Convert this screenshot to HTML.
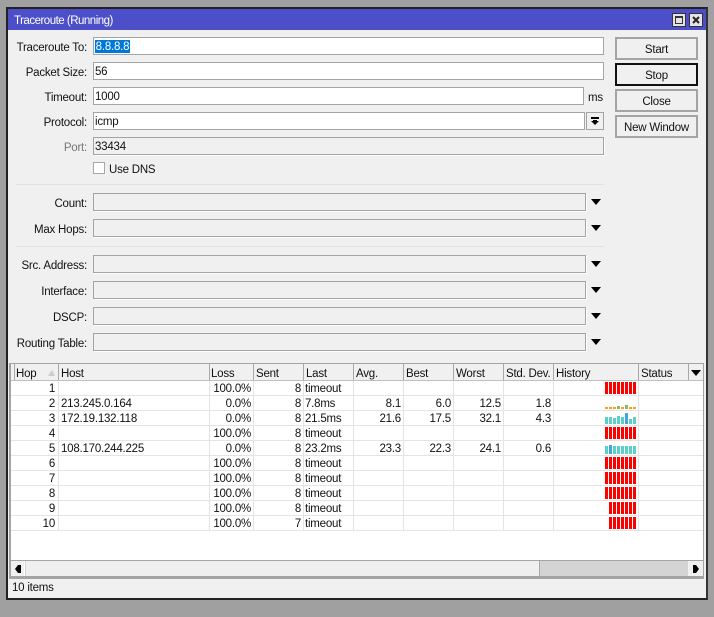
<!DOCTYPE html>
<html><head><meta charset="utf-8"><style>
html,body{margin:0;padding:0}
body{width:714px;height:617px;background:#a0a0a0;position:relative;overflow:hidden;font:11.5px/16px "Liberation Sans",sans-serif;letter-spacing:-.22px;color:#111}
div,span{position:absolute;box-sizing:border-box;white-space:nowrap}
#win{left:6px;top:7px;width:702px;height:593px;background:#f0f0f0;border:2px solid #222;border-right-color:#333}
#tb{left:8px;top:9px;width:698px;height:21px;background:#4c4fc7}
.t{left:14px;top:13px;color:#fff;letter-spacing:-.5px}
.l{width:72px;left:15px;text-align:right}
.f{left:93px;height:18px;background:#fff;border:1px solid #a4a4a4;padding:1px 0 0 1px;line-height:16px}
.d{background:#f0f0f0;box-shadow:1px 1px 0 #fff}
.b{left:615px;width:83px;height:23px;background:#f0f0f0;border:2px solid #a4a4a4;text-align:center;line-height:22px}
.a{left:591px;width:0;height:0;border-left:5px solid transparent;border-right:5px solid transparent;border-top:6px solid #000}
.s{left:16px;width:588px;height:1px;background:#e2e2e2}
.h{top:366px}
.v{top:364px;width:1px;height:16px;background:#a8a8a8}
.g{top:381px;width:1px;height:150px;background:#e4e4e4}
.hl{left:11px;width:692px;height:1px;background:#e4e4e4}
.c{text-align:right}
</style></head><body>
<div id="win"></div><div id="tb"></div>
<span class="t">Traceroute (Running)</span>
<div style="left:672px;top:13px;width:14px;height:14px;background:#e4e4e8;border:1px solid #333"><div style="left:2px;top:2px;width:8px;height:8px;border:1px solid #333;border-top-width:2px"></div></div>
<div style="left:689px;top:13px;width:14px;height:14px;background:#e4e4e8;border:1px solid #333"><svg width="12" height="12" style="position:absolute;left:0;top:0"><path d="M3 3l6 6M9 3l-6 6" stroke="#222" stroke-width="2" fill="none"/></svg></div>

<span class="l" style="top:40px">Traceroute To:</span>
<span class="l" style="top:65px">Packet Size:</span>
<span class="l" style="top:90px">Timeout:</span>
<span class="l" style="top:115px">Protocol:</span>
<span class="l" style="top:140px;color:#777">Port:</span>
<div class="f" style="top:37px;width:511px"><span style="left:1px;top:2px;width:35px;height:13px;background:#0078d7;color:#fff;line-height:14px;text-align:center">8.8.8.8</span></div>
<div class="f" style="top:62px;width:511px">56</div>
<div class="f" style="top:87px;width:491px">1000</div>
<span style="left:588px;top:90px;">ms</span>
<div class="f" style="top:112px;width:492px">icmp</div>
<div style="left:586px;top:112px;width:18px;height:18px;background:#f0f0f0;border:1px solid #a4a4a4"><svg width="16" height="16" style="position:absolute;left:0;top:0"><path d="M4 4h8v2H4zM6 7h4v1h2L8 12 4 8h2z" fill="#000"/></svg></div>
<div class="f d" style="top:137px;width:511px">33434</div>
<div style="left:93px;top:162px;width:12px;height:12px;background:#fff;border:1px solid #a8a8a8"></div>
<span style="left:109px;top:162px">Use DNS</span>
<div class="s" style="top:184px"></div>
<span class="l" style="top:196px">Count:</span><div class="f d" style="top:193px;width:493px"></div><div class="a" style="top:199px"></div>
<span class="l" style="top:222px">Max Hops:</span><div class="f d" style="top:219px;width:493px"></div><div class="a" style="top:225px"></div>
<div class="s" style="top:246px"></div>
<span class="l" style="top:258px">Src. Address:</span><div class="f d" style="top:255px;width:493px"></div><div class="a" style="top:261px"></div>
<span class="l" style="top:284px">Interface:</span><div class="f d" style="top:281px;width:493px"></div><div class="a" style="top:287px"></div>
<span class="l" style="top:310px">DSCP:</span><div class="f d" style="top:307px;width:493px"></div><div class="a" style="top:313px"></div>
<span class="l" style="top:336px">Routing Table:</span><div class="f d" style="top:333px;width:493px"></div><div class="a" style="top:339px"></div>

<div class="b" style="top:37px">Start</div>
<div class="b" style="top:63px;border-color:#111">Stop</div>
<div class="b" style="top:89px">Close</div>
<div class="b" style="top:115px">New Window</div>

<div style="left:9px;top:363px;width:695px;height:214px;background:#fff;border:1px solid #a4a4a4;border-left-width:2px"></div>
<div style="left:11px;top:364px;width:692px;height:17px;background:#f0f0f0;border-bottom:1px solid #c0c0c0"></div>
<div class="v" style="left:14px"></div><div class="v" style="left:58px"></div><div class="v" style="left:209px"></div><div class="v" style="left:253px"></div><div class="v" style="left:303px"></div><div class="v" style="left:353px"></div><div class="v" style="left:403px"></div><div class="v" style="left:453px"></div><div class="v" style="left:503px"></div><div class="v" style="left:553px"></div><div class="v" style="left:638px"></div><div class="v" style="left:688px"></div>
<div class="g" style="left:58px"></div><div class="g" style="left:209px"></div><div class="g" style="left:253px"></div><div class="g" style="left:303px"></div><div class="g" style="left:353px"></div><div class="g" style="left:403px"></div><div class="g" style="left:453px"></div><div class="g" style="left:503px"></div><div class="g" style="left:553px"></div><div class="g" style="left:638px"></div>
<span class="h" style="left:16px">Hop</span><span class="h" style="left:61px">Host</span><span class="h" style="left:211px">Loss</span><span class="h" style="left:256px">Sent</span><span class="h" style="left:306px">Last</span><span class="h" style="left:356px">Avg.</span><span class="h" style="left:406px">Best</span><span class="h" style="left:456px">Worst</span><span class="h" style="left:506px">Std. Dev.</span><span class="h" style="left:556px">History</span><span class="h" style="left:641px">Status</span>
<svg width="8" height="6" style="position:absolute;left:48px;top:370px"><path d="M4 0L7 6H0z" fill="#ccc"/></svg>
<div class="a" style="left:691px;top:370px"></div>

<div class="hl" style="top:395px"></div><div class="hl" style="top:410px"></div><div class="hl" style="top:425px"></div><div class="hl" style="top:440px"></div><div class="hl" style="top:455px"></div><div class="hl" style="top:470px"></div><div class="hl" style="top:485px"></div><div class="hl" style="top:500px"></div><div class="hl" style="top:515px"></div><div class="hl" style="top:530px"></div>

<div style="left:0;top:381px;width:714px;height:15px"><span class="c" style="left:15px;width:40px">1</span><span class="c" style="left:210px;width:41px">100.0%</span><span class="c" style="left:254px;width:47px">8</span><span style="left:305px">timeout</span></div>
<div style="left:0;top:396px;width:714px;height:15px"><span class="c" style="left:15px;width:40px">2</span><span style="left:61px">213.245.0.164</span><span class="c" style="left:210px;width:41px">0.0%</span><span class="c" style="left:254px;width:47px">8</span><span style="left:305px">7.8ms</span><span class="c" style="left:354px;width:47px">8.1</span><span class="c" style="left:404px;width:47px">6.0</span><span class="c" style="left:454px;width:47px">12.5</span><span class="c" style="left:504px;width:47px">1.8</span></div>
<div style="left:0;top:411px;width:714px;height:15px"><span class="c" style="left:15px;width:40px">3</span><span style="left:61px">172.19.132.118</span><span class="c" style="left:210px;width:41px">0.0%</span><span class="c" style="left:254px;width:47px">8</span><span style="left:305px">21.5ms</span><span class="c" style="left:354px;width:47px">21.6</span><span class="c" style="left:404px;width:47px">17.5</span><span class="c" style="left:454px;width:47px">32.1</span><span class="c" style="left:504px;width:47px">4.3</span></div>
<div style="left:0;top:426px;width:714px;height:15px"><span class="c" style="left:15px;width:40px">4</span><span class="c" style="left:210px;width:41px">100.0%</span><span class="c" style="left:254px;width:47px">8</span><span style="left:305px">timeout</span></div>
<div style="left:0;top:441px;width:714px;height:15px"><span class="c" style="left:15px;width:40px">5</span><span style="left:61px">108.170.244.225</span><span class="c" style="left:210px;width:41px">0.0%</span><span class="c" style="left:254px;width:47px">8</span><span style="left:305px">23.2ms</span><span class="c" style="left:354px;width:47px">23.3</span><span class="c" style="left:404px;width:47px">22.3</span><span class="c" style="left:454px;width:47px">24.1</span><span class="c" style="left:504px;width:47px">0.6</span></div>
<div style="left:0;top:456px;width:714px;height:15px"><span class="c" style="left:15px;width:40px">6</span><span class="c" style="left:210px;width:41px">100.0%</span><span class="c" style="left:254px;width:47px">8</span><span style="left:305px">timeout</span></div>
<div style="left:0;top:471px;width:714px;height:15px"><span class="c" style="left:15px;width:40px">7</span><span class="c" style="left:210px;width:41px">100.0%</span><span class="c" style="left:254px;width:47px">8</span><span style="left:305px">timeout</span></div>
<div style="left:0;top:486px;width:714px;height:15px"><span class="c" style="left:15px;width:40px">8</span><span class="c" style="left:210px;width:41px">100.0%</span><span class="c" style="left:254px;width:47px">8</span><span style="left:305px">timeout</span></div>
<div style="left:0;top:501px;width:714px;height:15px"><span class="c" style="left:15px;width:40px">9</span><span class="c" style="left:210px;width:41px">100.0%</span><span class="c" style="left:254px;width:47px">8</span><span style="left:305px">timeout</span></div>
<div style="left:0;top:516px;width:714px;height:15px"><span class="c" style="left:15px;width:40px">10</span><span class="c" style="left:210px;width:41px">100.0%</span><span class="c" style="left:254px;width:47px">7</span><span style="left:305px">timeout</span></div>

<svg width="714" height="617" style="position:absolute;left:0;top:0" shape-rendering="crispEdges">
<g fill="#ff0000">
<path d="M605 382h3v12h-3zM609 382h3v12h-3zM613 382h3v12h-3zM617 382h3v12h-3zM621 382h3v12h-3zM625 382h3v12h-3zM629 382h3v12h-3zM633 382h3v12h-3z"/>
<path d="M605 427h3v12h-3zM609 427h3v12h-3zM613 427h3v12h-3zM617 427h3v12h-3zM621 427h3v12h-3zM625 427h3v12h-3zM629 427h3v12h-3zM633 427h3v12h-3z"/>
<path d="M605 457h3v12h-3zM609 457h3v12h-3zM613 457h3v12h-3zM617 457h3v12h-3zM621 457h3v12h-3zM625 457h3v12h-3zM629 457h3v12h-3zM633 457h3v12h-3z"/>
<path d="M605 472h3v12h-3zM609 472h3v12h-3zM613 472h3v12h-3zM617 472h3v12h-3zM621 472h3v12h-3zM625 472h3v12h-3zM629 472h3v12h-3zM633 472h3v12h-3z"/>
<path d="M605 487h3v12h-3zM609 487h3v12h-3zM613 487h3v12h-3zM617 487h3v12h-3zM621 487h3v12h-3zM625 487h3v12h-3zM629 487h3v12h-3zM633 487h3v12h-3z"/>
<path d="M609 502h3v12h-3zM613 502h3v12h-3zM617 502h3v12h-3zM621 502h3v12h-3zM625 502h3v12h-3zM629 502h3v12h-3zM633 502h3v12h-3z"/>
<path d="M609 517h3v12h-3zM613 517h3v12h-3zM617 517h3v12h-3zM621 517h3v12h-3zM625 517h3v12h-3zM629 517h3v12h-3zM633 517h3v12h-3z"/>
</g>
<g fill="#ff9f1a"><path d="M605 407h3v2h-3zM609 407h3v2h-3zM613 407h3v2h-3zM621 407h3v2h-3zM629 407h3v2h-3zM633 407h3v2h-3z"/></g>
<g fill="#8fb56a"><path d="M617 406h3v3h-3zM625 405h3v4h-3z"/></g>
<g fill="#5ccfc7"><path d="M605 417h3v7h-3zM609 417h3v7h-3zM613 418h3v6h-3zM617 416h3v8h-3zM621 417h3v7h-3zM629 419h3v5h-3zM633 417h3v7h-3z"/>
<path d="M605 446h3v8h-3zM613 446h3v8h-3zM617 446h3v8h-3zM621 446h3v8h-3zM625 446h3v8h-3zM629 446h3v8h-3zM633 446h3v8h-3z"/></g>
<g fill="#3fa9dc"><path d="M625 413h3v11h-3zM609 445h3v9h-3z"/></g>
</svg>

<div style="left:11px;top:560px;width:692px;height:17px;background:#d4d4d4;border-top:1px solid #a4a4a4;border-bottom:1px solid #a4a4a4"></div>
<div style="left:11px;top:561px;width:14px;height:15px;background:#f0f0f0;border-right:1px solid #fff"></div>
<div style="left:26px;top:561px;width:514px;height:15px;background:#efefef;border-right:1px solid #a8a8a8"></div>
<div style="left:688px;top:561px;width:15px;height:15px;background:#f0f0f0"></div>
<svg width="714" height="617" style="position:absolute;left:0;top:0"><path d="M15 569l3-4h3v8h-3zM699 569l-3-4h-3v8h3z" fill="#000"/></svg>
<div style="left:9px;top:577px;width:695px;height:2px;background:#a4a4a4"></div>
<span style="left:12px;top:580px">10 items</span>
</body></html>
